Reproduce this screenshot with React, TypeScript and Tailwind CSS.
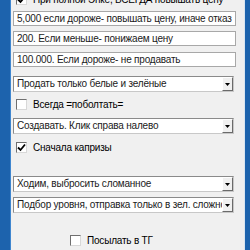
import type { ReactNode } from "react";

const font = { fontFamily: '"Liberation Sans", Arial, sans-serif', letterSpacing: "-0.2px" };

function Box({ checked }: { checked?: boolean }) {
  return (
    <div className="w-[11px] h-[11px] shrink-0 bg-white border border-t-[#6f6f6f] border-l-[#6f6f6f] border-b-[#d8d8d8] border-r-[#d8d8d8] flex items-center justify-center">
      {checked && (
        <svg width="9" height="9" viewBox="0 0 9 9">
          <path d="M1 4.5 L3.5 7 L8 1.5" fill="none" stroke="#000" strokeWidth="1.8" />
        </svg>
      )}
    </div>
  );
}

function Check({ label, checked, className }: { label: string; checked?: boolean; className?: string }) {
  return (
    <div className={"h-[11px] flex items-center gap-[6px] " + (className ?? "")}>
      <Box checked={checked} />
      <span className="text-[10px] leading-[11px] text-black whitespace-nowrap">{label}</span>
    </div>
  );
}

function TextBox({ children, className }: { children: ReactNode; className?: string }) {
  return (
    <div
      className={
        "w-[223px] h-[15px] bg-white border border-[#a8a8a8] px-[3px] text-[10px] leading-[13px] text-[#1a1a1a] whitespace-nowrap overflow-hidden " +
        (className ?? "")
      }
    >
      {children}
    </div>
  );
}

function Combo({ children, className }: { children: ReactNode; className?: string }) {
  return (
    <div
      className={
        "w-[221px] h-[16px] bg-white border border-t-[#8a8a8a] border-l-[#8a8a8a] border-b-[#c8c8c8] border-r-[#c8c8c8] flex items-stretch " +
        (className ?? "")
      }
    >
      <div className="flex-1 px-[3px] text-[10px] leading-[14px] text-[#1a1a1a] whitespace-nowrap overflow-hidden">{children}</div>
      <div className="w-[11px] bg-[#f0f0f0] border border-t-white border-l-white border-b-[#6a6a6a] border-r-[#6a6a6a] flex items-center justify-center">
        <svg width="5" height="3" viewBox="0 0 5 3">
          <path d="M0 0 H5 L2.5 3 Z" fill="#000" />
        </svg>
      </div>
    </div>
  );
}

export default function App() {
  return (
    <div className="w-[250px] h-[250px] overflow-hidden flex" style={font}>
      <div className="w-[11px] bg-[#1d63ad] border-r border-[#3f86cf]" />
      <div className="flex-1 bg-[#f0f0f0] flex flex-col pl-[2px]">
        <Check label="При полной Энке, ВСЕГДА повышать цену" checked className="-mt-[6px] ml-[3px]" />
        <TextBox className="mt-[6px]">5,000 если дороже- повышать цену, иначе отказ</TextBox>
        <TextBox className="mt-[5px]">200. Если меньше- понижаем цену</TextBox>
        <TextBox className="mt-[6px]">100.000. Если дороже- не продавать</TextBox>
        <Combo className="mt-[9px]">Продать только белые и зелёные</Combo>
        <Check label="Всегда =поболтать=" className="mt-[7px] ml-[3px]" />
        <Combo className="mt-[8px]">Создавать. Клик справа налево</Combo>
        <Check label="Сначала капризы" checked className="mt-[8px] ml-[3px]" />
        <Combo className="mt-[23px]">Ходим, выбросить сломанное</Combo>
        <Combo className="mt-[5px]">Подбор уровня, отправка только в зел. сложности</Combo>
        <Check label="Посылать в ТГ" className="mt-[22px] ml-[57px]" />
      </div>
      <div className="w-[6px] bg-[#1d63ad] border-l border-[#d9e6f2]" />
    </div>
  );
}
